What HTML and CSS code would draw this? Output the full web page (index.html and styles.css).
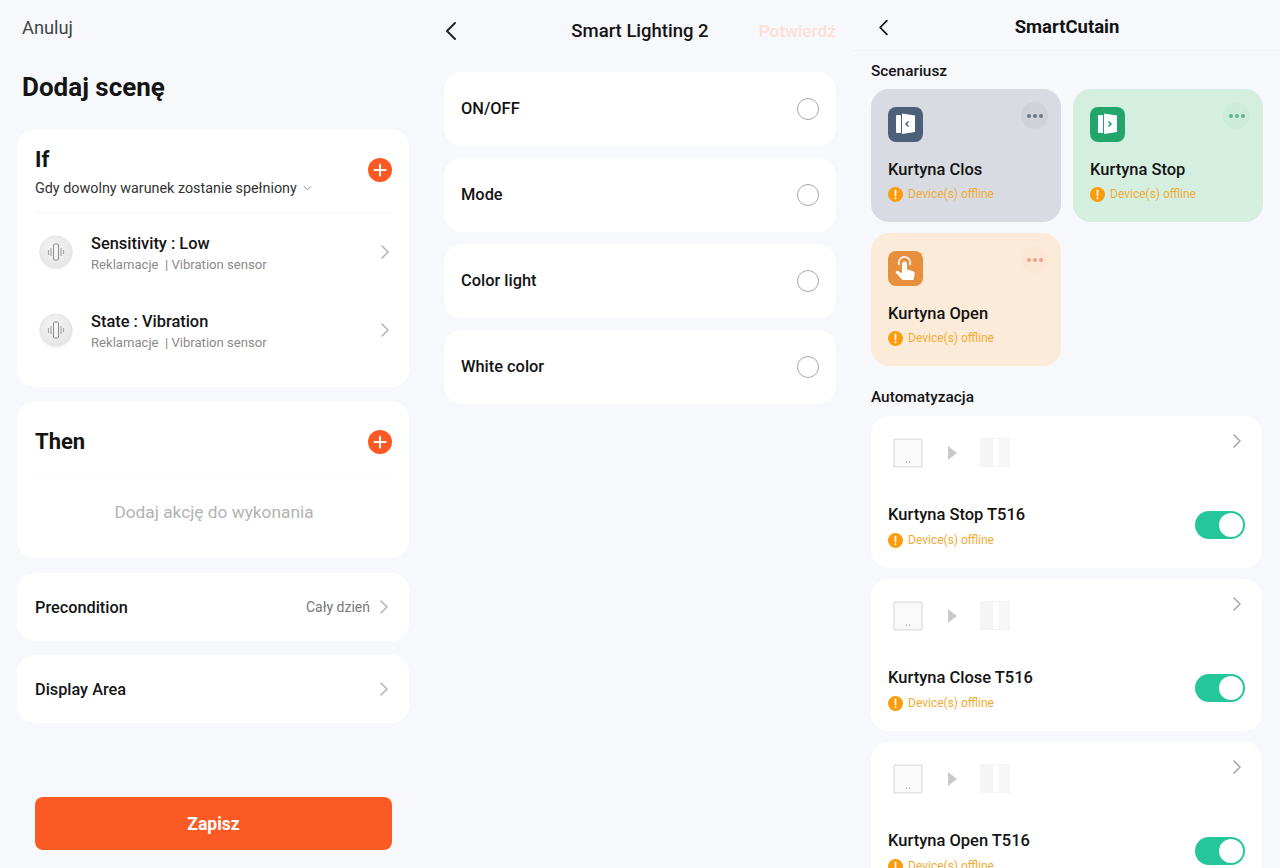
FILE: index.html
```html
<!DOCTYPE html>
<html lang="en">
<head>
    <meta charset="UTF-8">
    <meta name="viewport" content="width=device-width, initial-scale=1.0">
    <title>Dodaj scene</title>
    <link rel="stylesheet" href="styles.css">
</head>
<body>
    <svg class="defs" width="0" height="0">
        <defs>
            <radialGradient id="vibFill" cx="45%" cy="40%" r="65%">
                <stop offset="0" stop-color="#f6f6f6"/>
                <stop offset="1" stop-color="#e4e4e4"/>
            </radialGradient>
        </defs>
        <symbol id="chev" viewBox="0 0 10 16"><path d="M2 2l6 6-6 6" fill="none" stroke="currentColor" stroke-width="1.6" stroke-linecap="round" stroke-linejoin="round"/></symbol>
        <symbol id="back" viewBox="0 0 12 20"><path d="M10 2L2 10l8 8" fill="none" stroke="currentColor" stroke-width="2" stroke-linecap="round" stroke-linejoin="round"/></symbol>
        <symbol id="plus" viewBox="0 0 24 24"><circle cx="12" cy="12" r="12" fill="#fc5a25"/><path d="M12 6.500v11M6.500 12h11" stroke="#fff" stroke-width="2" stroke-linecap="round"/></symbol>
        <symbol id="warn" viewBox="0 0 16 16"><circle cx="8" cy="8" r="8" fill="#fb9c0c"/><path d="M8 3.500v5.500" stroke="#fff" stroke-width="1.800" stroke-linecap="round"/><circle cx="8" cy="12" r="1.100" fill="#fff"/></symbol>
        <symbol id="vib" viewBox="0 0 34 34">
            <circle cx="17" cy="17" r="16" fill="url(#vibFill)" stroke="#e4e4e4"/>
            <rect x="14.500" y="9" width="5" height="16" rx="1" fill="#f4f4f4" stroke="#8b8b8b"/>
            <path d="M12 13v8M9.500 15v5M22 13v8M24.500 15v4" stroke="#a5a5a5" stroke-width="1.200"/>
        </symbol>
        <symbol id="switch" viewBox="0 0 28 28"><rect x="1" y="1" width="26" height="26" rx="1" fill="#fafafa" stroke="#dddddd" stroke-width="1.200"/><path d="M12 22.500h1M15 22.500h1" stroke="#999"/></symbol>
        <symbol id="curtain" viewBox="0 0 30 30"><rect width="30" height="29" fill="#f3f3f3"/><rect x="1" y="1" width="12" height="27" fill="#f5f5f5"/><rect x="13" y="1" width="5" height="27" fill="#fff"/><rect x="18" y="1" width="11" height="27" fill="#f7f7f7"/></symbol>
        <symbol id="door" viewBox="0 0 35 35"><rect x="8" y="8" width="5" height="18" rx=".8" fill="#fff"/><path d="M14 6.500l13 2V25l-13 2z" fill="#fff"/></symbol>
    </svg>

    <main class="screens">
        <!-- add scene -->
        <section class="screen scene">
            <div class="cancel">Anuluj</div>
            <h1>Dodaj scenę</h1>

            <div class="card if-card">
                <div class="if-head">
                    <div>
                        <h2>If</h2>
                        <div class="when">Gdy dowolny warunek zostanie spełniony <svg class="caret" viewBox="0 0 10 6"><path d="M1 1l4 4 4-4" fill="none" stroke="#888" stroke-width="1.100"/></svg></div>
                    </div>
                    <svg class="plus"><use href="#plus"/></svg>
                </div>
                <div class="cond">
                    <svg class="vib"><use href="#vib"/></svg>
                    <div class="cond-text">
                        <div class="cond-title">Sensitivity : Low</div>
                        <div class="cond-sub">Reklamacje &nbsp;| Vibration sensor</div>
                    </div>
                    <svg class="chev"><use href="#chev"/></svg>
                </div>
                <div class="cond">
                    <svg class="vib"><use href="#vib"/></svg>
                    <div class="cond-text">
                        <div class="cond-title">State : Vibration</div>
                        <div class="cond-sub">Reklamacje &nbsp;| Vibration sensor</div>
                    </div>
                    <svg class="chev"><use href="#chev"/></svg>
                </div>
            </div>

            <div class="card then-card">
                <div class="then-head">
                    <h2>Then</h2>
                    <svg class="plus"><use href="#plus"/></svg>
                </div>
                <div class="then-empty">Dodaj akcję do wykonania</div>
            </div>

            <div class="card row-card">
                <span class="row-label">Precondition</span>
                <span class="row-value">Cały dzień</span>
                <svg class="chev"><use href="#chev"/></svg>
            </div>
            <div class="card row-card">
                <span class="row-label">Display Area</span>
                <svg class="chev"><use href="#chev"/></svg>
            </div>

            <button class="save-btn" type="button">Zapisz</button>
        </section>

        <!-- lighting functions -->
        <section class="screen lighting">
            <header class="light-head">
                <svg class="back"><use href="#back"/></svg>
                <span class="light-title">Smart Lighting 2</span>
                <span class="confirm">Potwierdź</span>
            </header>
            <div class="option"><span>ON/OFF</span><i class="radio"></i></div>
            <div class="option"><span>Mode</span><i class="radio"></i></div>
            <div class="option"><span>Color light</span><i class="radio"></i></div>
            <div class="option"><span>White color</span><i class="radio"></i></div>
        </section>

        <!-- home -->
        <section class="screen home">
            <header class="home-head">
                <svg class="back"><use href="#back"/></svg>
                <span class="home-title">SmartCutain</span>
            </header>
            <div class="home-body">
                <h3>Scenariusz</h3>
                <div class="tiles">
                    <div class="tile tile-grey">
                        <div class="tile-top">
                            <span class="tile-icon"><svg viewBox="0 0 35 35"><use href="#door"/><path d="M20.500 14.500L18 17l2.500 2.500" fill="none" stroke="#4d6079" stroke-width="1.500"/></svg></span>
                            <span class="more"><b></b><b></b><b></b></span>
                        </div>
                        <div class="tile-name">Kurtyna Clos</div>
                        <div class="offline"><svg><use href="#warn"/></svg>Device(s) offline</div>
                    </div>
                    <div class="tile tile-green">
                        <div class="tile-top">
                            <span class="tile-icon"><svg viewBox="0 0 35 35"><use href="#door"/><path d="M18.500 14.500L21 17l-2.500 2.500" fill="none" stroke="#22a66c" stroke-width="1.500"/></svg></span>
                            <span class="more"><b></b><b></b><b></b></span>
                        </div>
                        <div class="tile-name">Kurtyna Stop</div>
                        <div class="offline"><svg><use href="#warn"/></svg>Device(s) offline</div>
                    </div>
                    <div class="tile tile-orange">
                        <div class="tile-top">
                            <span class="tile-icon"><svg viewBox="0 0 35 35"><path d="M11 13.500a5.800 5.800 0 1 1 11 0" fill="none" stroke="#fff" stroke-width="1.600" stroke-linecap="round"/><path d="M14 13a2.500 2.500 0 0 1 5 0v5.500l5.500 1.500c1.500.4 2.300 1.400 2.100 3l-.8 5c-.1.700-.7 1-1.300 1H14.500l-6.500-7c-1-1.200.4-3 2-2l4 2.300z" fill="#fff"/></svg></span>
                            <span class="more"><b></b><b></b><b></b></span>
                        </div>
                        <div class="tile-name">Kurtyna Open</div>
                        <div class="offline"><svg><use href="#warn"/></svg>Device(s) offline</div>
                    </div>
                </div>

                <h3 class="auto-title">Automatyzacja</h3>
                <div class="auto">
                    <div class="auto-flow">
                        <svg class="dev"><use href="#switch"/></svg><i class="play"></i><svg class="dev"><use href="#curtain"/></svg>
                        <svg class="chev"><use href="#chev"/></svg>
                    </div>
                    <div class="auto-foot">
                        <div>
                            <div class="tile-name">Kurtyna Stop T516</div>
                            <div class="offline"><svg><use href="#warn"/></svg>Device(s) offline</div>
                        </div>
                        <span class="toggle"></span>
                    </div>
                </div>
                <div class="auto">
                    <div class="auto-flow">
                        <svg class="dev"><use href="#switch"/></svg><i class="play"></i><svg class="dev"><use href="#curtain"/></svg>
                        <svg class="chev"><use href="#chev"/></svg>
                    </div>
                    <div class="auto-foot">
                        <div>
                            <div class="tile-name">Kurtyna Close T516</div>
                            <div class="offline"><svg><use href="#warn"/></svg>Device(s) offline</div>
                        </div>
                        <span class="toggle"></span>
                    </div>
                </div>
                <div class="auto">
                    <div class="auto-flow">
                        <svg class="dev"><use href="#switch"/></svg><i class="play"></i><svg class="dev"><use href="#curtain"/></svg>
                        <svg class="chev"><use href="#chev"/></svg>
                    </div>
                    <div class="auto-foot">
                        <div>
                            <div class="tile-name">Kurtyna Open T516</div>
                            <div class="offline"><svg><use href="#warn"/></svg>Device(s) offline</div>
                        </div>
                        <span class="toggle"></span>
                    </div>
                </div>
            </div>
        </section>
    </main>
</body>
</html>
```

FILE: styles.css
```css
* {
    margin: 0;
    padding: 0;
    box-sizing: border-box;
    font-family: Roboto, "Liberation Sans", sans-serif;
}
html, body {
    height: 868px;
    overflow: hidden;
}
body {
    background: #f6f8fc;
    color: #141414;
}
.defs {
    display: block;
    height: 0;
}
.screens {
    display: grid;
    grid-template-columns: 427px 426px 427px;
    height: 868px;
}
.screen {
    min-width: 0;
    overflow: hidden;
}
.card {
    background: #fff;
    border-radius: 18px;
    width: 392px;
}
.chev {
    width: 10px;
    height: 16px;
    color: #b5b5b5;
    flex: none;
}
.back {
    width: 12px;
    height: 20px;
    color: #222;
    flex: none;
}

/* left screen */
.scene {
    padding: 17px 18px 0 17px;
}
.cancel {
    font-size: 18.300px;
    line-height: 21px;
    margin-left: 5px;
    color: #444;
}
h1 {
    font-size: 26px;
    line-height: 32px;
    font-weight: 700;
    margin: 33px 0 26px 5px;
}
h2 {
    font-size: 22px;
    line-height: 26px;
    font-weight: 700;
}
.if-card {
    height: 258px;
    padding: 18px 17px 0 18px;
}
.if-head {
    display: flex;
    justify-content: space-between;
    align-items: flex-start;
    height: 66px;
    border-bottom: 1px solid #f8f8f8;
}
.when {
    font-size: 14.350px;
    line-height: 18px;
    color: #333;
    margin-top: 7px;
}
.caret {
    width: 9px;
    height: 6px;
    margin-left: 3px;
    vertical-align: 2px;
}
.plus {
    width: 24px;
    height: 24px;
    flex: none;
}
.if-head .plus {
    margin-top: 11px;
}
.cond {
    display: flex;
    align-items: center;
    height: 78px;
}
.vib {
    width: 34px;
    height: 34px;
    margin-left: 4px;
    flex: none;
    filter: drop-shadow(0 1px 1px rgba(0, 0, 0, 0.08));
}
.cond-text {
    flex: 1;
    margin-left: 18px;
    padding-top: 4px;
}
.cond-title {
    font-size: 16.400px;
    line-height: 20px;
    font-weight: 500;
}
.cond-sub {
    font-size: 13.100px;
    line-height: 18px;
    color: #8a8a8a;
    margin-top: 2px;
}
.cond .chev {
    margin-right: 2px;
}
.then-card {
    height: 157px;
    margin-top: 14px;
    margin-bottom: 15px;
    padding: 28px 17px 0 18px;
}
.then-head {
    display: flex;
    justify-content: space-between;
    align-items: center;
}
.then-empty {
    margin-top: 23px;
    padding-top: 22px;
    height: 60px;
    border: 1px solid #fbfbfb;
    border-right: none;
    border-bottom: none;
    text-align: center;
    font-size: 17.300px;
    line-height: 22px;
    color: #b3b3b3;
}
.row-card {
    display: flex;
    align-items: center;
    height: 68px;
    padding: 0 20px 0 18px;
    margin-top: 14px;
}
.row-label {
    flex: 1;
    font-size: 16.300px;
    font-weight: 500;
}
.row-value {
    font-size: 14px;
    color: #777;
    margin-right: 9px;
}
.save-btn {
    display: block;
    width: 357px;
    height: 53px;
    margin: 74px 0 0 18px;
    background: #fc5a25;
    color: #fff;
    border: none;
    border-radius: 8px;
    font-size: 17.500px;
    font-weight: 700;
}

/* middle screen */
.lighting {
    padding: 0 17px;
}
.light-head {
    display: grid;
    grid-template-columns: 1fr auto 1fr;
    align-items: center;
    height: 62px;
    margin-bottom: 10px;
}
.light-head .back {
    margin-left: 1px;
}
.light-title {
    font-size: 18.500px;
    font-weight: 500;
}
.confirm {
    justify-self: end;
    font-size: 17.300px;
    font-weight: 500;
    color: #fde0d5;
}
.option {
    display: flex;
    justify-content: space-between;
    align-items: center;
    background: #fff;
    border-radius: 18px;
    height: 74px;
    margin-bottom: 12px;
    padding: 0 17px 2px;
    font-size: 16.400px;
    font-weight: 500;
}
.radio {
    width: 22px;
    height: 22px;
    margin-bottom: -2px;
    border: 1.500px solid #a9a9a9;
    border-radius: 50%;
}

/* right screen */
.home-head {
    display: flex;
    align-items: center;
    height: 51px;
    padding: 4px 0 0 25px;
    border-bottom: 1px solid #eff1f5;
}
.home-head .back {
    width: 11px;
    height: 17px;
    color: #111;
}
.home-title {
    flex: 1;
    text-align: center;
    font-size: 18.500px;
    font-weight: 700;
    margin-right: 35px;
}
.home-body {
    padding: 0 17px 0 18px;
}
h3 {
    font-size: 15.400px;
    line-height: 18px;
    font-weight: 500;
    margin: 11px 0 9px;
}
.tiles {
    display: grid;
    grid-template-columns: 190px 190px;
    column-gap: 12px;
    row-gap: 11px;
}
.tile {
    height: 133px;
    border-radius: 18px;
    padding: 18px 17px 0;
}
.tile-grey { background: #d8dce2; }
.tile-green { background: #d4efe0; }
.tile-orange { background: #fdebd9; }
.tile-top {
    display: flex;
    justify-content: space-between;
}
.tile-icon {
    display: flex;
    width: 35px;
    height: 35px;
    border-radius: 8px;
}
.tile-icon svg {
    width: 35px;
    height: 35px;
}
.tile-grey .tile-icon { background: #4d6079; }
.tile-green .tile-icon { background: #22a66c; }
.tile-orange .tile-icon { background: #e78f3c; }
.more {
    display: flex;
    align-items: center;
    justify-content: center;
    gap: 2px;
    width: 27px;
    height: 27px;
    margin: -5px -4px 0 0;
    border-radius: 50%;
}
.more b {
    width: 4px;
    height: 4px;
    border-radius: 50%;
}
.tile-grey .more { background: #cfd3d9; }
.tile-grey .more b { background: #6d7684; }
.tile-green .more { background: #cdebdb; }
.tile-green .more b { background: #5fb592; }
.tile-orange .more { background: #fce6d4; }
.tile-orange .more b { background: #eda08a; }
.tile-name {
    font-size: 16.500px;
    line-height: 20px;
    font-weight: 500;
    color: #141414;
}
.tile .tile-name {
    margin-top: 18px;
}
.offline {
    display: flex;
    align-items: center;
    font-size: 12px;
    line-height: 16px;
    color: #f0ab35;
    margin-top: 7px;
}
.tile .offline {
    margin-top: 6px;
}
.offline svg {
    width: 15px;
    height: 15px;
    margin-right: 5px;
    flex: none;
}
.auto-title {
    margin: 22px 0 10px;
}
.auto {
    width: 391px;
    height: 152px;
    background: #fff;
    border-radius: 18px;
    padding: 0 17px;
    margin-bottom: 11px;
}
.auto-flow {
    display: flex;
    align-items: center;
    height: 74px;
    padding-left: 5px;
    position: relative;
}
.dev {
    width: 30px;
    height: 30px;
    flex: none;
    filter: blur(0.5px);
}
.play {
    width: 0;
    height: 0;
    border-left: 9px solid #c9c9c9;
    border-top: 7px solid transparent;
    border-bottom: 7px solid transparent;
    margin: 0 23px 0 25px;
}
.auto-flow .chev {
    position: absolute;
    right: 3px;
    top: 17px;
    color: #a8a8a8;
}
.auto-foot {
    display: flex;
    justify-content: space-between;
    align-items: center;
    margin-top: 15px;
}
.toggle {
    position: relative;
    width: 50px;
    height: 28px;
    margin-bottom: 4px;
    border-radius: 14px;
    background: #25c79a;
}
.toggle::after {
    content: "";
    position: absolute;
    right: 2px;
    top: 2px;
    width: 24px;
    height: 24px;
    border-radius: 50%;
    background: #fff;
}
```
